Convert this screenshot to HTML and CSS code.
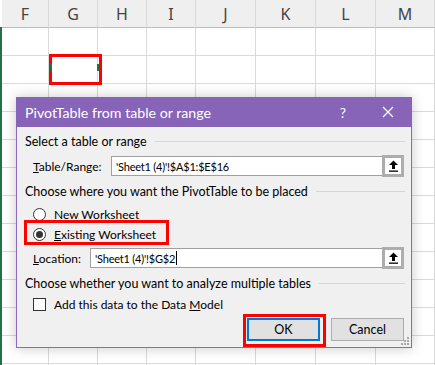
FILE: index.html
```html
<!DOCTYPE html>
<html>
<head>
<meta charset="utf-8">
<link rel="stylesheet" href="styles.css">
</head>
<body>
<div class="app">
  <div class="edge"></div>
  <div class="sheet">
    <div class="col w49"><div class="hd">F</div><div class="cells"></div></div>
    <div class="col w49"><div class="hd">G</div><div class="cells"></div></div>
    <div class="col w49"><div class="hd">H</div><div class="cells"></div></div>
    <div class="col w49"><div class="hd">I</div><div class="cells"></div></div>
    <div class="col w60"><div class="hd">J</div><div class="cells"></div></div>
    <div class="col w60"><div class="hd">K</div><div class="cells"></div></div>
    <div class="col w60"><div class="hd">L</div><div class="cells"></div></div>
    <div class="col wlast"><div class="hd">M</div><div class="cells"></div></div>
  </div>
  <div class="selcell"><span class="mk mk-l"></span><span class="mk mk-r"></span></div>

  <div class="dialog">
    <div class="titlebar">
      <span class="title">PivotTable from table or range</span>
      <span class="help">?</span>
      <svg class="close" width="12" height="12" viewBox="0 0 12 12"><path d="M1 1L11 11M11 1L1 11" stroke="#fff" stroke-width="1.2" fill="none"/></svg>
    </div>
    <div class="body">
      <div class="heading"><span>Select a table or range</span><span class="rule"></span></div>
      <div class="field range">
        <span class="lbl"><u>T</u>able/Range:</span>
        <div class="input">'Sheet1 (4)'!$A$1:$E$16</div>
        <div class="pick"><svg width="11" height="12" viewBox="0 0 11 12"><path d="M5.5 0.5L10 5H7V9H4V5H1Z" fill="#000"/><rect x="1" y="10.5" width="9" height="1.3" fill="#000"/></svg></div>
      </div>
      <div class="heading"><span>Choose where you want the PivotTable to be placed</span><span class="rule"></span></div>
      <div class="opt opt1"><span class="radio"></span><span>New Worksheet</span></div>
      <div class="opt opt2"><span class="radio on"></span><span><u>E</u>xisting Worksheet</span><div class="hl hl-opt"></div></div>
      <div class="field loc">
        <span class="lbl"><u>L</u>ocation:</span>
        <div class="input">'Sheet1 (4)'!$G$2<span class="caret"></span></div>
        <div class="pick"><svg width="11" height="12" viewBox="0 0 11 12"><path d="M5.5 0.5L10 5H7V9H4V5H1Z" fill="#000"/><rect x="1" y="10.5" width="9" height="1.3" fill="#000"/></svg></div>
      </div>
      <div class="heading"><span>Choose whether you want to analyze multiple tables</span><span class="rule"></span></div>
      <div class="opt chk"><span class="box"></span><span>Add this data to the Data <u>M</u>odel</span></div>
      <div class="buttons">
        <div class="btn ok">OK<div class="hl hl-ok"></div></div>
        <div class="btn">Cancel</div>
      </div>
    </div>
    <svg class="grip" width="8" height="8" viewBox="0 0 8 8"><rect x="6" y="0" width="2" height="2" fill="#a8a8a8"/><rect x="3" y="3" width="2" height="2" fill="#a8a8a8"/><rect x="6" y="3" width="2" height="2" fill="#a8a8a8"/><rect x="0" y="6" width="2" height="2" fill="#a8a8a8"/><rect x="3" y="6" width="2" height="2" fill="#a8a8a8"/><rect x="6" y="6" width="2" height="2" fill="#a8a8a8"/></svg>
  </div>
</div>
</body>
</html>
```
FILE: styles.css
```css
* { box-sizing: border-box; }
html, body { margin: 0; padding: 0; }
body {
  width: 435px;
  height: 365px;
  overflow: hidden;
  background: #fff;
  font-family: "Lato", "Noto Sans", sans-serif;
}
.app {
  position: relative;
  width: 435px;
  height: 365px;
  display: flex;
}
.edge {
  width: 2px;
  flex: none;
  margin-top: 27px;
  background: #217346;
}
.sheet {
  display: flex;
  flex: 1;
}
.col {
  display: flex;
  flex-direction: column;
  flex: none;
}
.w49 { width: 49px; }
.col.w49:first-child { width: 47px; }
.w60 { width: 60px; }
.wlast { flex: 1; }
.hd {
  height: 28px;
  background: #efefef;
  border-right: 1px solid #d9d9d9;
  border-bottom: 1px solid #bdbdbd;
  display: flex;
  align-items: center;
  justify-content: center;
  font-family: "Noto Sans", sans-serif;
  font-size: 16px;
  color: #444;
  padding-top: 1px;
}
.cells {
  flex: 1;
  border-right: 1px solid #dadada;
  background: repeating-linear-gradient(to bottom, transparent 0, transparent 27px, #dadada 27px, #dadada 28px);
}
.selcell {
  position: absolute;
  left: 49px;
  top: 54px;
  width: 53px;
  height: 31px;
  border: 3px solid #ff0000;
}
.mk {
  position: absolute;
  width: 2px;
  height: 7px;
  background: #217346;
  top: 7px;
}
.mk-l { left: -2px; }
.mk-r { right: 0px; }

.dialog {
  position: absolute;
  left: 16px;
  top: 97px;
  width: 396px;
  height: 251px;
  background: #f0f0f0;
  border: 1px solid #8a6abf;
  border-top: none;
  box-shadow: 0 0 12px rgba(0,0,0,0.22);
  font-size: 12px;
  color: #000;
}
.titlebar {
  height: 30px;
  margin: 0 -1px;
  background: #8764b8;
  color: #fff;
  display: flex;
  align-items: center;
  padding-left: 9px;
  font-size: 14.2px;
}
.title { flex: 1; padding-top: 1px; }
.help { font-size: 14px; margin-right: 36px; }
.close { margin-right: 18px; }
.body {
  padding: 6px 6px 0 8px;
  display: flex;
  flex-direction: column;
}
.heading {
  height: 16px;
  display: flex;
  align-items: center;
  gap: 8px;
  white-space: nowrap;
  font-size: 12.5px;
}
.rule {
  flex: 1;
  height: 1px;
  background: #d5d5d5;
  margin-top: 1px;
}
.field {
  display: flex;
  align-items: center;
  height: 22px;
  margin-top: 6px;
  margin-bottom: 6px;
  padding-left: 8px;
  padding-right: 1px;
}
.field.loc { margin-top: 2px; margin-bottom: 6px; }
.lbl { white-space: nowrap; }
.range .lbl { width: 78px; }
.loc .lbl { width: 57px; }
.input {
  flex: 1;
  height: 20px;
  background: #fff;
  border: 1px solid #a0a0a0;
  border-right: none;
  display: flex;
  align-items: center;
  padding-left: 4px;
  font-size: 11px;
  letter-spacing: -0.2px;
}
.caret {
  width: 1px;
  height: 14px;
  background: #000;
  margin-left: 1px;
}
.pick {
  width: 22px;
  height: 22px;
  border: 3px solid #adadad;
  background: #fff;
  display: flex;
  align-items: center;
  justify-content: center;
}
.opt {
  position: relative;
  height: 16px;
  display: flex;
  align-items: center;
  padding-left: 8px;
  white-space: nowrap;
}
.opt1 { margin-top: 7px; }
.opt2 { margin-top: 4px; margin-bottom: 3px; }
.radio {
  width: 13px;
  height: 13px;
  border-radius: 50%;
  border: 1px solid #333;
  background: #fff;
  margin-right: 8px;
  display: flex;
  align-items: center;
  justify-content: center;
}
.radio.on::after {
  content: "";
  width: 7px;
  height: 7px;
  border-radius: 50%;
  background: #333;
}
.box {
  width: 13px;
  height: 13px;
  border: 1px solid #333;
  background: #fff;
  margin-right: 8px;
}
.chk { margin-top: 5px; }
.hl {
  position: absolute;
  border: 3px solid #ff0000;
  pointer-events: none;
}
.hl-opt {
  left: -1px;
  top: -6px;
  width: 145px;
  height: 25px;
}
.buttons {
  display: flex;
  justify-content: flex-end;
  gap: 11px;
  margin-top: 6px;
  padding-right: 1px;
}
.btn {
  position: relative;
  width: 73px;
  height: 23px;
  border: 1px solid #adadad;
  background: #e1e1e1;
  display: flex;
  align-items: center;
  justify-content: center;
  font-size: 12.5px;
}
.btn.ok { border: 2px solid #0078d7; }
.hl-ok {
  left: -6px;
  top: -6px;
  width: 83px;
  height: 33px;
}
.grip {
  position: absolute;
  right: 2px;
  bottom: 2px;
}
```
